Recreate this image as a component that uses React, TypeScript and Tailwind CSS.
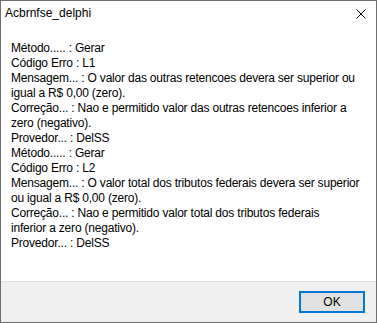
import React from "react";

const lines = [
  "Método..... : Gerar",
  "Código Erro : L1",
  "Mensagem... : O valor das outras retencoes devera ser superior ou",
  "igual a R$ 0,00 (zero).",
  "Correção... : Nao e permitido valor das outras retencoes inferior a",
  "zero (negativo).",
  "Provedor... : DelSS",
  "Método..... : Gerar",
  "Código Erro : L2",
  "Mensagem... : O valor total dos tributos federais devera ser superior",
  "ou igual a R$ 0,00 (zero).",
  "Correção... : Nao e permitido valor total dos tributos federais",
  "inferior a zero (negativo).",
  "Provedor... : DelSS",
];

const CloseIcon = () => (
  <svg width="10" height="10" viewBox="0 0 10 10" className="block">
    <path d="M0.5 0.5 L9.5 9.5 M9.5 0.5 L0.5 9.5" stroke="#000" strokeWidth="1" fill="none" />
  </svg>
);

const App = () => {
  return (
    <div
      className="w-[377px] h-[323px] border border-[#6e6e6e] bg-white flex flex-col text-[12px] leading-[15px] text-black"
      style={{ fontFamily: '"Segoe UI", "Liberation Sans", Arial, sans-serif' }}
    >
      {/* title bar */}
      <div className="h-[29px] flex items-start justify-between pl-[4px] pr-[10px] pt-[5px]">
        <span>Acbrnfse_delphi</span>
        <div className="mt-[3px]">
          <CloseIcon />
        </div>
      </div>

      {/* message */}
      <div className="flex-1 pl-[10px] pt-[11px] tracking-[-0.2px]">
        {lines.map((l, i) => (
          <div key={i} className="whitespace-nowrap">
            {l}
          </div>
        ))}
      </div>

      {/* footer */}
      <div className="h-[41px] bg-[#f0f0f0] border-t border-[#dfdfdf] flex justify-end items-start pt-[9px] pr-[11px]">
        <button className="w-[66px] h-[22px] bg-[#e1e1e1] border-2 border-[#0078d7] flex items-center justify-center leading-none">
          OK
        </button>
      </div>
    </div>
  );
};

export default App;
